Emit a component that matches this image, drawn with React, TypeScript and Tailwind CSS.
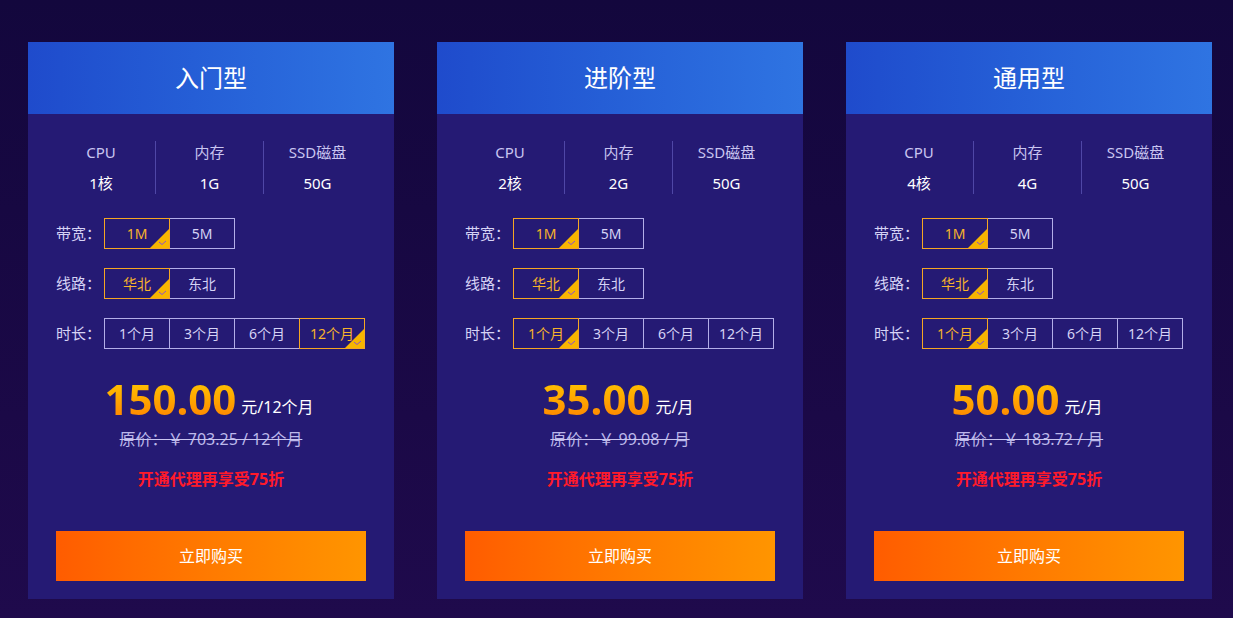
import React from "react";

type Plan = {
  title: string;
  cpu: string;
  mem: string;
  bwSel: number;
  lineSel: number;
  durSel: number;
  price: string;
  unit: string;
  orig: string;
};

const plans: Plan[] = [
  { title: "入门型", cpu: "1核", mem: "1G", bwSel: 0, lineSel: 0, durSel: 3, price: "150.00", unit: "元/12个月", orig: "原价：￥ 703.25 / 12个月" },
  { title: "进阶型", cpu: "2核", mem: "2G", bwSel: 0, lineSel: 0, durSel: 0, price: "35.00", unit: "元/月", orig: "原价：￥ 99.08 / 月" },
  { title: "通用型", cpu: "4核", mem: "4G", bwSel: 0, lineSel: 0, durSel: 0, price: "50.00", unit: "元/月", orig: "原价：￥ 183.72 / 月" },
];

const font = { fontFamily: '"Noto Sans", "Noto Sans CJK SC", sans-serif' };

function Opt({ label, selected }: { label: string; selected: boolean }) {
  return (
    <div
      className={
        "relative w-[66px] h-[31px] flex items-center justify-center text-[14px] -ml-px first:ml-0 border " +
        (selected ? "border-[#f5a623] text-[#f7b32b] z-10" : "border-[#b3aee8] text-[#d6d3f5]")
      }
    >
      {label}
      {selected && (
        <svg className="absolute right-0 bottom-0" width="19" height="19" viewBox="0 0 19 19">
          <polygon points="19,0 19,19 0,19" fill="#f7b500" />
          <polyline points="9,13 12,15.5 16,12" fill="none" stroke="#8a4fd0" strokeWidth="1" />
        </svg>
      )}
    </div>
  );
}

function Row({ label, items, sel }: { label: string; items: string[]; sel: number }) {
  return (
    <div className="flex items-center h-[31px]">
      <div className="w-[48px] text-[15px] text-[#d6d3f5]">{label}</div>
      <div className="flex">
        {items.map((it, i) => (
          <Opt key={it} label={it} selected={i === sel} />
        ))}
      </div>
    </div>
  );
}

function Card({ p }: { p: Plan }) {
  return (
    <div className="w-[366px] h-[557px] bg-[#251a74] flex flex-col">
      <div className="h-[72px] bg-gradient-to-r from-[#1f4bcc] to-[#2f74e2] flex items-center justify-center text-white text-[24px]">
        {p.title}
      </div>
      <div className="flex justify-center mt-[27px] ml-[-4px]">
        {[
          ["CPU", p.cpu],
          ["内存", p.mem],
          ["SSD磁盘", "50G"],
        ].map(([a, b], i) => (
          <div
            key={a}
            className={"w-[108px] flex flex-col items-center " + (i > 0 ? "border-l border-[#4f47a6]" : "")}
          >
            <div className="text-[15px] text-[#c9c5f0] leading-[22px]">{a}</div>
            <div className="text-[15px] text-white leading-[22px] mt-[9px]">{b}</div>
          </div>
        ))}
      </div>
      <div className="flex flex-col gap-[19px] pl-[28px] mt-[24px]">
        <Row label="带宽：" items={["1M", "5M"]} sel={p.bwSel} />
        <Row label="线路：" items={["华北", "东北"]} sel={p.lineSel} />
        <Row label="时长：" items={["1个月", "3个月", "6个月", "12个月"]} sel={p.durSel} />
      </div>
      <div className="flex items-end justify-center mt-[24px] ml-[-4px]">
        <span className="text-[42px] font-bold leading-[52px] bg-gradient-to-b from-[#ffd000] to-[#ff7a00] bg-clip-text text-transparent">
          {p.price}
        </span>
        <span className="text-[16px] text-white ml-[5px] mb-[6px]">{p.unit}</span>
      </div>
      <div className="text-center text-[16px] leading-[22px] text-[#bcb8ea] line-through decoration-[#c9c5f0] mt-[3px]">
        {p.orig}
      </div>
      <div className="text-center text-[16px] font-bold text-[#ff1a2a] mt-[17px]">开通代理再享受75折</div>
      <div className="mt-[40px] mx-[28px] h-[50px] bg-gradient-to-r from-[#ff5c00] to-[#ff9500] flex items-center justify-center text-white text-[16px]">
        立即购买
      </div>
    </div>
  );
}

export default function App() {
  return (
    <div
      className="w-[1233px] h-[618px] bg-gradient-to-b from-[#13073d] to-[#1f0a4c] flex gap-[43px] pl-[28px] pt-[42px]"
      style={font}
    >
      {plans.map((p) => (
        <Card key={p.title} p={p} />
      ))}
    </div>
  );
}
